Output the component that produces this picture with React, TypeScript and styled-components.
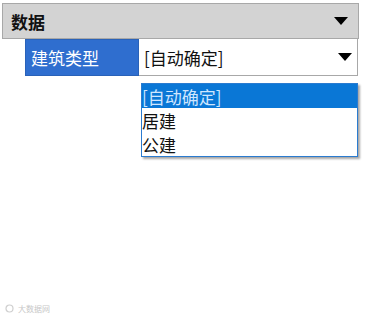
import React from "react";
import styled, { createGlobalStyle } from "styled-components";

const Global = createGlobalStyle`
  html, body { margin: 0; padding: 0; background: #ffffff; }
  body { font-family: "Noto Sans CJK SC", "Noto Sans", sans-serif; width: 368px; height: 319px; overflow: hidden; }
`;

const Page = styled.div`
  position: relative;
  width: 368px;
  height: 319px;
  padding: 3px 0 0 2px;
  box-sizing: border-box;
`;

const Header = styled.div`
  width: 357px;
  height: 36px;
  box-sizing: border-box;
  background: #d3d3d3;
  border: 1px solid #a8a8a8;
  display: flex;
  align-items: center;
  justify-content: space-between;
  padding: 0 10px 0 8px;
`;

const HeaderTitle = styled.span`
  font-size: 17px;
  font-weight: 700;
  color: #111;
  line-height: 1;
`;

const Caret = styled.svg`
  display: block;
`;

const Row = styled.div`
  display: flex;
  margin-left: 23px;
  height: 37px;
  width: 333px;
`;

const Label = styled.div`
  width: 114px;
  box-sizing: border-box;
  background: #2f6ecf;
  border: 1px solid #2a62b8;
  color: #ffffff;
  font-size: 17px;
  line-height: 1;
  display: flex;
  align-items: center;
  padding-left: 5px;
`;

const Value = styled.div`
  flex: 1;
  box-sizing: border-box;
  border-right: 1px solid #a8a8a8;
  border-bottom: 1px solid #a8a8a8;
  background: #fff;
  display: flex;
  align-items: center;
  justify-content: space-between;
  padding: 0 4px 0 5px;
  font-size: 17px;
  line-height: 1;
  color: #111;
`;

const List = styled.div`
  position: absolute;
  left: 141px;
  top: 83px;
  width: 217px;
  box-sizing: border-box;
  background: #fff;
  border: 1px solid #2a7bd0;
  box-shadow: 2px 2px 2px rgba(0, 0, 0, 0.35);
`;

const Item = styled.div<{ $selected?: boolean }>`
  height: ${(p) => (p.$selected ? "24px" : "24px")};
  display: flex;
  align-items: center;
  font-size: 17px;
  line-height: 1;
  padding-left: 0;
  background: ${(p) => (p.$selected ? "#0a77d6" : "#ffffff")};
  color: ${(p) => (p.$selected ? "#cfe6ff" : "#111111")};
`;

const Watermark = styled.div`
  position: absolute;
  left: 5px;
  bottom: 6px;
  display: flex;
  align-items: center;
  gap: 3px;
  font-size: 8px;
  color: #c8c8c8;
  line-height: 1;
`;

const Down = ({ w, h }: { w: number; h: number }) => (
  <Caret width={w} height={h} viewBox="0 0 14 8">
    <polygon points="0,0 14,0 7,8" fill="#000" />
  </Caret>
);

export default function App() {
  return (
    <>
      <Global />
      <Page>
        <Header>
          <HeaderTitle>数据</HeaderTitle>
          <Down w={14} h={8} />
        </Header>
        <Row>
          <Label>建筑类型</Label>
          <Value>
            <span>[自动确定]</span>
            <Down w={16} h={8} />
          </Value>
        </Row>
        <List>
          <Item $selected>[自动确定]</Item>
          <Item>居建</Item>
          <Item>公建</Item>
        </List>
        <Watermark>
          <svg width="10" height="9" viewBox="0 0 10 9">
            <circle cx="4.5" cy="4.5" r="3.5" fill="none" stroke="#cfcfcf" strokeWidth="1.2" />
          </svg>
          <span>大数据网</span>
        </Watermark>
      </Page>
    </>
  );
}
